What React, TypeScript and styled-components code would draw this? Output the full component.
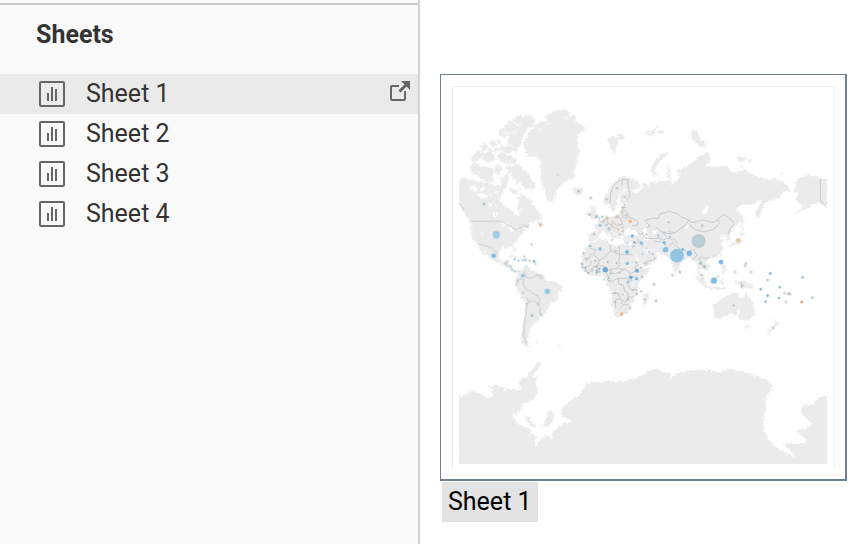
import React, { useState } from "react";
import styled, { createGlobalStyle } from "styled-components";

const GlobalStyle = createGlobalStyle`
  *, *::before, *::after { box-sizing: border-box; }
  html, body, #root { height: 100%; }
  body {
    margin: 0;
    background: #fff;
    color: #333;
    font-family: Roboto, "Liberation Sans", sans-serif;
    font-size: 25px;
    line-height: 40px;
  }
`;

const Page = styled.div`
  display: flex;
  min-height: 100%;
`;

const Sidebar = styled.aside`
  flex: 0 0 420px;
  padding-top: 3px;
  background: #fafafa;
  border-right: 2px solid #d2d2d2;
`;

const SheetsSection = styled.section`
  border-top: 2px solid #c8c8c8;
`;

const SectionTitle = styled.h2`
  margin: 0;
  padding: 10px 36px 19px;
  font-size: 25px;
  font-weight: 700;
  line-height: 40px;
`;

const SheetList = styled.ul`
  margin: 0;
  padding: 0;
  list-style: none;
`;

const SheetRow = styled.li<{ $active: boolean }>`
  display: flex;
  align-items: center;
  height: 40px;
  padding: 0 8px 0 39px;
  background: ${(p) => (p.$active ? "#eaeaea" : "transparent")};
`;

const SheetButton = styled.button`
  display: flex;
  flex: 1;
  align-items: center;
  gap: 21px;
  padding: 0;
  border: 0;
  background: none;
  color: inherit;
  font: inherit;
  text-align: left;
  cursor: pointer;
`;

const OpenButton = styled.button`
  display: flex;
  padding: 0 0 6px;
  border: 0;
  background: none;
  color: #666;
  cursor: pointer;
`;

const Preview = styled.main`
  flex: 1;
  min-width: 0;
  padding: 74px 13px 22px 20px;
`;

const PreviewCard = styled.div`
  padding: 11px 10px 9px 11px;
  border: solid #708090;
  border-width: 1px 2px 2px 1px;
`;

const MapFrame = styled.div`
  border: 1px solid #f0f0f0;
  border-bottom: 0;
`;

const MapSvg = styled.svg`
  display: block;
  width: 100%;
  height: auto;
`;

const Tooltip = styled.div`
  width: fit-content;
  margin: 1px 0 0 2px;
  padding: 0 6px;
  background: #e3e3e3;
  color: #000;
`;

const SheetIcon = () => (
  <svg width="26" height="26" viewBox="0 0 26 26" fill="none" aria-hidden="true">
    <rect x="1" y="1" width="24" height="24" rx="1" stroke="#666" strokeWidth="2" />
    <path d="M9 12v8M13 6v14M17 8v12" stroke="#666" strokeWidth="2" />
  </svg>
);

const OpenIcon = () => (
  <svg width="20" height="20" viewBox="0 0 20 20" fill="none" aria-hidden="true">
    <path d="M9 5H2Q1 5 1 6V18Q1 19 2 19H14Q15 19 15 18V10" stroke="currentColor" strokeWidth="2" />
    <path d="M9.5 10.500L17 3" stroke="currentColor" strokeWidth="3" />
    <path d="M11 0H20V9Z" fill="currentColor" />
  </svg>
);

const AMERICAS = [
  // North American mainland
  "M27 238L45 232 52 240 62 238 78 244 95 248 118 250 135 260 146 252 152 262 160 245 164 228 171 222 178 232 172 250 164 268 156 280 152 298 156 312 170 318 184 322 195 333 198 348 206 350 209 340 203 324 206 306 204 290 214 282 226 286 232 300 242 300 246 314 256 324 264 334 274 348 268 358 252 362 236 368 226 376 238 376 236 384 222 390 215 402 204 415 196 426 190 434 190 442 198 450 192 454 186 443 172 440 158 443 147 452 143 464 148 480 160 486 168 478 178 478 174 490 184 496 183 508 190 514 204 512 206 518 198 520 186 514 172 500 160 493 146 488 130 480 116 472 108 456 92 438 98 450 108 466 104 466 92 452 84 434 74 426 66 408 63 390 65 378 60 360 46 346 38 326 27 310Z",
  // South America
  "M205 518L215 508 232 505 248 510 262 520 278 530 290 542 310 545 334 556 336 566 326 578 322 600 302 610 292 626 280 642 272 652 264 650 268 662 250 668 244 684 236 692 238 702 230 714 232 730 242 742 230 740 216 728 214 712 220 690 222 664 228 636 228 608 214 594 204 572 194 554 196 542 204 530Z",
  // Greenland
  "M252 78L272 66 292 62 286 50 305 38 325 30 346 30 358 38 354 48 374 44 378 56 372 66 388 72 406 82 400 92 388 98 382 112 386 126 380 140 388 158 380 170 382 184 374 194 378 206 368 214 374 226 360 238 344 242 332 256 318 272 312 290 308 306 296 302 288 288 284 272 276 252 272 234 276 216 270 202 276 190 268 176 256 168 240 168 224 160 230 148 218 138 222 122 232 112 238 96Z",
  // Ellesmere and Axel Heiberg
  "M162 82L172 72 182 60 196 58 204 46 224 50 240 44 256 62 248 76 234 82 226 96 218 112 212 128 204 142 198 156 186 152 190 138 176 132 172 118 184 108 168 106 160 96Z",
  "M148 92L158 86 160 100 168 110 160 118 150 108Z",
  // Arctic islands
  "M116 126L130 120 142 134 128 142ZM90 138L108 130 114 146 98 154ZM138 118L154 120 150 134ZM170 136L186 142 184 156 168 150ZM132 146L144 142 150 152 138 156ZM112 148L124 146 128 154 116 156ZM150 138L162 136 164 148 154 152ZM66 168L82 154 100 158 90 172 78 184 66 186ZM98 164L116 156 132 162 136 180 116 186 100 180ZM140 164L160 156 168 168 184 168 200 180 198 190 174 190 152 186ZM160 144L178 142 184 156 166 160ZM62 194L76 188 88 198 86 212 70 222 60 214ZM84 206L100 198 112 206 128 204 132 216 126 228 134 242 118 248 98 238 82 230 74 220ZM132 200L150 194 156 212 142 226ZM146 234L160 232 156 248Z",
  // Baffin Island
  "M168 204L178 196 190 200 204 194 214 204 222 212 236 222 242 236 254 252 254 262 246 262 250 274 238 264 226 266 216 254 208 246 198 250 194 238 184 230 188 216 176 220Z",
  // Southampton and smaller islands
  "M178 262L190 268 200 270 202 280 190 282 180 274ZM204 256L212 262 210 270ZM260 362L278 366 282 378 268 378Z",
  // Iceland
  "M368 266L376 262 382 267 394 264 400 272 394 280 380 284 372 276Z",
  // Caribbean, Falklands
  "M176 468L190 466 206 476 194 472ZM210 478L226 476 228 483 214 482ZM258 724L266 726 262 729ZM326 734L333 738 330 740Z",
];

const EURASIA_AFRICA = [
  // Eurasian mainland
  "M72 380L80 372 92 362 102 354 108 342 112 350 124 352 142 346 152 340 152 326 160 320 166 314 178 312 168 308 152 310 148 296 156 282 160 270 152 276 144 290 140 306 136 324 128 334 122 326 116 314 104 312 98 300 106 288 116 276 124 260 136 244 150 234 168 226 180 236 204 246 210 260 196 268 182 266 190 276 202 280 212 270 222 262 216 250 226 250 232 258 246 248 268 246 286 246 296 240 290 216 296 200 302 214 300 236 306 260 312 244 318 254 322 238 330 228 324 214 336 206 350 200 366 190 380 176 396 164 408 162 424 170 416 186 404 200 424 200 440 202 470 198 480 212 486 222 510 212 524 210 546 222 570 236 590 238 604 240 612 234 632 242 646 254 660 266 652 276 640 272 628 284 630 292 612 298 594 304 580 310 576 326 570 344 560 356 558 336 566 318 576 300 566 300 550 312 528 312 510 314 498 330 504 336 514 348 508 366 494 382 484 394 478 404 482 420 474 424 468 410 458 404 448 412 456 420 462 424 452 430 458 446 452 458 440 468 424 474 414 478 408 484 416 500 410 512 402 514 396 504 390 502 388 516 398 530 404 546 398 546 390 532 384 520 384 504 380 486 370 484 366 474 356 472 340 482 328 494 326 508 318 518 310 502 302 484 300 474 286 470 280 462 262 458 244 452 226 442 218 438 224 450 234 462 250 456 262 472 246 488 220 500 214 496 206 480 194 460 188 444 192 428 180 430 164 430 158 418 164 408 178 404 198 408 204 400 190 390 182 396 176 388 166 396 160 408 152 404 154 416 144 414 136 402 126 394 120 392 134 406 136 412 128 416 120 404 110 396 96 398 84 404 84 414 72 422 58 420 56 402 74 398 84 396 80 386Z",
  // Africa
  "M58 430L72 426 92 420 110 418 116 432 132 438 146 434 164 434 180 438 188 446 190 460 200 482 212 500 220 504 238 502 232 520 218 532 206 548 204 564 206 576 194 588 192 604 182 612 178 628 164 642 146 652 134 646 130 624 122 604 126 584 122 568 110 556 112 540 104 528 86 526 68 528 50 520 38 508 32 494 36 472 38 458 50 442Z",
  // Madagascar
  "M232 576L238 586 230 610 222 616 216 606 220 590Z",
  // British Isles
  "M64 318L74 318 72 330 82 340 86 350 76 356 60 356 68 346 62 332ZM52 336L62 334 62 346 52 350Z",
  // Svalbard, Franz Josef Land
  "M114 116L128 110 140 112 144 104 158 104 164 112 154 120 140 118 144 128 138 138 132 160 126 148 120 134ZM224 98L234 94 236 102ZM240 92L254 88 256 98 244 104ZM256 78L264 76 264 84ZM262 94L276 90 284 96 270 102ZM236 104L246 104 242 108Z",
  // Novaya Zemlya
  "M290 156L294 162 280 172 268 184 258 198 254 212 262 228 252 226 242 216 246 200 254 184 268 168Z",
  // Severnaya Zemlya, New Siberian Islands
  "M366 94L376 88 386 104 388 118 404 132 402 142 388 140 380 126 366 118 362 106ZM390 124L400 120 408 136 394 138ZM502 174L512 168 524 176 520 184 508 186ZM530 178L544 180 540 186ZM512 196L520 198 516 204ZM630 222L640 220 636 226Z",
  // Sakhalin, Alaska
  "M514 340L520 352 518 376 524 386 516 392 514 366ZM670 270L680 262 676 248 690 236 706 224 724 228 740 232 760 236 771 242 771 326 758 314 744 308 730 312 716 322 700 328 684 336 674 342 688 330 704 320 690 308 678 304 680 292 690 284 678 278Z",
  // Japan
  "M514 396L526 400 520 408 512 406ZM514 412L518 426 506 432 494 434 482 438 482 430 498 424 508 414Z",
  // Taiwan and Philippines
  "M451 460L456 462 452 472ZM448 482L456 480 458 494 466 502 468 516 458 518 456 502 450 496Z",
  // Indonesia, Borneo, Sulawesi
  "M376 526L388 534 402 546 412 560 404 562 390 548 378 536ZM410 562L430 566 444 568 468 568 466 564 440 564 416 558ZM420 534L432 530 444 522 446 534 440 550 426 552 418 544ZM450 538L464 536 454 544 462 554 452 554Z",
  // New Guinea
  "M492 540L504 546 518 542 536 550 550 560 546 566 530 562 516 566 506 554 494 548Z",
  // Australia
  "M430 614L446 606 458 596 470 588 482 590 482 580 498 578 508 580 506 592 518 600 522 590 526 574 534 594 548 610 554 628 550 644 540 658 524 662 510 658 502 644 486 640 466 648 448 654 434 650 432 632ZM526 674L536 674 534 686 526 686Z",
  // New Zealand
  "M610 654L618 664 628 668 622 678 614 682 616 670ZM608 678L614 684 604 696 594 700 592 694 602 684Z",
  // Faroe and Mediterranean islands, Sri Lanka
  "M60 290L66 292 62 298ZM112 396L116 402 112 408ZM326 514L332 516 330 522Z",
];

const ANTARCTICA = [
  "M28 140L60 142 90 143 125 148 140 142 130 128 140 120 165 126 190 122 205 128 225 122 236 108 234 88 240 70 256 52 270 38 262 52 248 66 240 82 256 86 252 100 258 122 252 142 240 154 222 162 214 180 226 190 228 202 246 222 262 232 290 226 306 218 314 200 328 196 332 180 348 166 366 154 384 146 400 126 412 106 426 100 444 104 464 98 500 100 524 98 546 92 560 88 578 80 600 66 618 62 642 72 656 76 652 100 648 124 660 104 670 84 690 72 720 68 752 64 780 66 800 72 820 68 838 62 862 66 892 74 918 84 944 90 964 108 952 128 940 148 944 172 936 196 934 220 938 244 946 264 966 290 990 306 1026 320 1062 340 1046 320 1030 304 1014 286 1042 288 1066 286 1074 264 1048 244 1074 236 1090 230 1088 214 1070 200 1058 186 1062 172 1086 168 1104 154 1131 140 1131 340 28 340Z",
  "M50 132L66 128 86 134 102 138 80 138ZM210 96L218 88 230 90 232 104 222 116 212 106ZM128 112L140 110 150 114 136 116Z",
];

const ICE_SHELVES = [
  "M186 190L206 196 196 182 210 184 220 160 240 156 252 146 300 140 350 160 334 178 332 196 348 206 370 214 348 218 328 228 310 246 304 266 296 256 282 258 268 272 258 292 252 276 260 262 240 252 244 240 224 230 206 222 194 210Z",
];

const ICE_ISLANDS = [
  "M292 186L302 180 310 192 308 216 294 228 276 232 288 210ZM224 196L236 202 242 216 258 222 256 232 238 226Z",
];

const LAKES = [
  "M152 290L166 280 180 290 196 298 206 310 196 328 198 346 186 332 166 320 152 308Z",
  "M62 258L74 258 84 266 76 274 62 268ZM82 284L94 280 112 288 104 296 90 292ZM92 266L102 262 106 270 96 274ZM116 284L124 282 122 294ZM114 302L122 308 128 322 118 322ZM134 270L142 272 138 282ZM128 338L138 338 138 352 132 350ZM132 312L140 316 138 324ZM210 326L222 324 222 332 212 332ZM148 368L164 366 178 374 166 378ZM176 378L186 382 190 396 180 392ZM196 376L206 382 200 388ZM96 398L100 396 102 402 96 402ZM308 568L318 562 316 572Z",
];

const INNER_SEAS = [
  "M162 388L174 386 188 390 198 398 188 402 174 400 162 402ZM216 390L228 386 234 400 230 410 238 420 228 422 218 408ZM248 392L260 390 260 400 250 402ZM166 264L160 272 164 278 170 270ZM338 392L352 384 356 372 350 370 346 382ZM398 344L400 330 408 320 416 324 410 330 412 340ZM502 640L504 628 510 632 506 644ZM186 546L192 550 188 560Z",
];

const ELLESMERE_FJORDS =
  "M160 98L178 102 196 98 204 88M182 60L198 72 214 74M262 80L272 96M286 62L294 78 302 68M340 52L354 56M150 108L162 112 172 120";

const AMERICAS_BORDERS =
  "M27 308L36 322 44 334M64 364H152L166 370 184 380 196 388 208 384 224 376 232 382 236 372M86 432L104 436 116 440 124 442 132 452 144 460M166 488L172 500M222 512L226 530 240 536 252 530 262 524M262 520L266 532 280 536M222 536L220 552 226 568 238 570 248 580 264 588 270 602 264 612 252 602 236 606 230 592M230 606L228 640 222 672 222 710 230 734M264 614L272 626 268 640 280 646M204 544L198 556M218 534L204 540";

const EURASIA_BORDERS =
  "M120 312L122 280 130 258 144 244 158 238 176 240M158 242L156 258M172 240L176 262 180 290 170 300M154 322L168 322M160 328L172 338 178 352 190 356 206 366 200 376 186 376M158 334V352L174 354M86 350L90 364 104 368M110 350L114 370 126 376M134 352L150 352 158 372 140 376M150 378L160 388M226 362L246 354 264 356 270 342 296 334 320 340 336 352 352 358 366 368 400 360 430 368 446 356 462 342 476 352 494 370 482 382 474 402M226 364L240 378 230 384M256 380L276 396 300 402 316 398 332 386 346 376 356 360M356 372L374 388 402 396 430 388 448 372 444 358M262 410L280 420 292 414 310 420M278 398L290 410M204 400L220 404 224 414 240 416 268 414M200 412L210 430 222 440M194 432L206 424M254 424L276 426 290 440 276 456M280 456L296 440 308 428 322 440 332 448 352 454 370 448M312 416L322 430M372 450L380 466 370 478M382 480L394 470 404 476 420 472M390 478L398 496 410 504M218 492L230 484 248 480M60 444L78 450 70 464 90 480 104 472 122 452 120 434M64 460L58 474 42 476M120 452L148 464 148 438M148 464H188M150 466L146 482 150 494 140 506 120 508 108 516 104 500 88 496 70 500 62 512 56 522M88 480L82 500 80 526M108 516L116 532 112 540M120 508L128 522 148 518 164 506 182 520 196 514 196 498 206 494M146 506L162 510M112 542L128 544 140 536 176 534 182 520M144 536L146 552 160 556 164 574 176 580 172 592 190 590M122 580H146L148 596 136 600V622M148 596L166 606 176 594M150 626L162 612 176 616M176 536L174 556 182 568 204 570M182 534L198 528M48 500L60 496 64 482M426 534L438 540M514 546V564";

const ALASKA_BORDER = "M751 236V302L764 314 771 308";

type Dot = [x: number, y: number, r: number, color: string];

const B = "#83bbdc";
const D = "#5fa3cf";
const O = "#f0b26c";
const T = "#a5ccd6";

const AMERICAS_DOTS: Dot[] = [
  [102, 312, 4, B], [139, 404, 11, "#9ecae1"], [131, 467, 7, "#7dbbe0"], [271, 375, 4, O], [245, 434, 3, B],
  [292, 574, 8, "#8fc4df"], [246, 647, 4, B], [218, 527, 5, B], [203, 542, 3, B], [220, 578, 3, T],
  [231, 612, 3, T], [265, 612, 3, T], [229, 500, 3, B], [194, 478, 3, D], [206, 482, 3, B], [223, 470, 3, B],
  [220, 480, 3, B], [228, 480, 3, B], [239, 482, 3, O], [252, 484, 4, D], [256, 492, 3, T], [166, 492, 3, B],
  [172, 486, 2, D], [174, 498, 2, B], [183, 500, 3, B], [186, 508, 3, B], [194, 513, 3, B], [206, 514, 2, O],
  [263, 524, 2, O], [272, 526, 3, B], [280, 529, 2, B], [386, 274, 3, B], [323, 225, 2, "#bbb"], [272, 644, 2, T],
];

const EURASIA_DOTS: Dot[] = [
  [321, 467, 21, "#92c5e3"], [386, 423, 21, "#b9ced5"], [358, 460, 8, "#7db9df"], [287, 449, 8, "#88bfe1"],
  [283, 428, 5, B], [106, 509, 8, "#69abd6"], [201, 512, 6, "#69abd6"], [171, 456, 6, "#7db9df"],
  [187, 408, 5, B], [79, 350, 5, T], [90, 376, 5, T], [72, 402, 3, B], [112, 355, 5, "#dec3a4"],
  [117, 387, 5, T], [181, 364, 5, O], [142, 349, 4, "#dec3a4"], [163, 314, 3, O], [158, 324, 3, O],
  [155, 336, 3, O], [168, 345, 3, O], [128, 366, 3, O], [136, 372, 2, O], [128, 380, 3, O], [144, 374, 2, O],
  [145, 388, 3, O], [158, 394, 3, O], [160, 380, 2, O], [138, 384, 2, O], [150, 404, 2, O], [102, 362, 3, B],
  [110, 375, 3, B], [124, 374, 2, O], [97, 350, 3, B], [59, 344, 3, D], [62, 294, 4, T], [110, 298, 3, B],
  [141, 265, 3, B], [164, 290, 3, T], [26, 274, 3, B], [296, 367, 3, B], [396, 377, 3, B], [193, 427, 3, "#3178af"],
  [190, 438, 3, B], [214, 429, 5, B], [229, 403, 3, B], [218, 398, 2, O], [265, 406, 3, B], [282, 397, 2, B],
  [300, 410, 3, B], [300, 396, 2, B], [310, 398, 2, B], [228, 445, 2, B], [238, 456, 3, B], [248, 462, 3, B],
  [254, 476, 3, B], [229, 491, 3, B], [217, 462, 2, B], [338, 448, 4, D], [330, 516, 4, T], [308, 526, 4, "#d5cdbb"],
  [60, 438, 4, B], [90, 447, 5, B], [137, 452, 3, B], [41, 460, 3, B], [50, 478, 3, B], [76, 482, 3, B],
  [113, 486, 3, B], [140, 489, 3, B], [172, 490, 5, B], [199, 488, 3, B], [212, 503, 3, B], [36, 492, 3, D],
  [38, 502, 3, B], [46, 504, 3, D], [48, 512, 3, B], [54, 518, 3, D], [66, 510, 3, B], [78, 500, 3, B],
  [80, 512, 3, D], [88, 507, 3, D], [80, 517, 3, B], [87, 515, 3, B], [122, 520, 3, B], [148, 517, 2, B],
  [103, 538, 3, T], [116, 534, 3, B], [119, 542, 2, B], [174, 546, 4, B], [183, 532, 5, D], [200, 536, 5, B],
  [183, 540, 2, B], [216, 530, 3, B], [136, 579, 3, B], [158, 584, 2, D], [188, 571, 2, D], [200, 582, 3, B],
  [174, 598, 3, D], [135, 606, 3, B], [155, 608, 2, B], [180, 624, 3, B], [168, 638, 2, T], [155, 642, 5, O],
  [214, 574, 3, B], [225, 599, 3, B], [252, 553, 4, T], [258, 602, 4, T], [126, 420, 3, T], [172, 430, 2, B],
  [505, 421, 7, "#dfccac"], [453, 486, 7, "#78b5df"], [432, 542, 9, "#83bfe2"], [391, 490, 5, T],
  [403, 500, 4, B], [396, 526, 3, B], [400, 535, 2, D], [397, 376, 2, B], [491, 616, 3, B], [518, 557, 3, B],
  [610, 684, 3, T], [495, 516, 4, "#cddbd8"], [527, 491, 4, T], [525, 498, 3, T], [543, 516, 4, "#ecd3b1"],
  [601, 520, 4, D], [593, 540, 4, T], [572, 568, 4, D], [629, 562, 4, B], [698, 532, 4, B], [593, 587, 4, D],
  [587, 605, 4, B], [627, 594, 4, B], [644, 580, 4, "#d2d5d6"], [656, 581, 4, B], [661, 583, 3, O],
  [648, 606, 4, "#d2dbdc"], [695, 606, 4, "#dc7d42"], [727, 593, 4, T], [432, 468, 2, T],
];

const Dots = ({ dots }: { dots: Dot[] }) => (
  <>
    {dots.map(([x, y, r, color], i) =>
      r <= 4 ? (
        <g key={i}>
          <circle cx={x} cy={y} r={r + 2} fill="#b8bdc0" fillOpacity="0.3" />
          <circle cx={x} cy={y} r={r - 0.75} fill={color} fillOpacity="0.9" />
        </g>
      ) : (
        <circle key={i} cx={x} cy={y} r={r} fill={color} />
      )
    )}
  </>
);

const WorldMap = () => (
  <MapSvg viewBox="3 3 1143 1149" role="img" aria-label="World map of Sheet 1">
    <defs>
      <filter id="coast" x="0" y="0" width="1149" height="1152" filterUnits="userSpaceOnUse">
        <feTurbulence type="fractalNoise" baseFrequency="0.12" numOctaves="3" seed="4" />
        <feDisplacementMap in="SourceGraphic" scale="15" xChannelSelector="R" yChannelSelector="G" />
      </filter>
      <clipPath id="extent">
        <rect x="21" y="0" width="1104" height="1132" />
      </clipPath>
    </defs>
    <g clipPath="url(#extent)">
      <g filter="url(#coast)" fill="#ebebeb">
        <g transform="translate(-6 42)">
          <path d={AMERICAS.join("")} stroke="#ebebeb" strokeWidth="2" />
          <path d={LAKES.join("")} fill="#fff" />
          <path d={ELLESMERE_FJORDS} fill="none" stroke="#fff" strokeWidth="3" />
        </g>
        <g transform="translate(354 42)">
          <path d={EURASIA_AFRICA.join("")} stroke="#ebebeb" strokeWidth="2" />
          <path d={INNER_SEAS.join("")} fill="#fff" />
        </g>
        <g transform="translate(-6 792)">
          <path d={ANTARCTICA.join("")} stroke="#ebebeb" strokeWidth="10" />
          <path d={ICE_SHELVES.join("")} fill="#fff" />
          <path d={ICE_ISLANDS.join("")} />
        </g>
      </g>
    </g>
    <g fill="none" stroke="#c9c9c9" strokeWidth="3" strokeLinejoin="round">
      <path d={AMERICAS_BORDERS} transform="translate(-6 42)" />
      <path d={EURASIA_BORDERS + ALASKA_BORDER} transform="translate(354 42)" />
    </g>
    <g transform="translate(-6 42)">
      <Dots dots={AMERICAS_DOTS} />
    </g>
    <g transform="translate(354 42)">
      <Dots dots={EURASIA_DOTS} />
    </g>
  </MapSvg>
);

const SHEETS = ["Sheet 1", "Sheet 2", "Sheet 3", "Sheet 4"];

export default function App() {
  const [active, setActive] = useState(SHEETS[0]);

  return (
    <>
      <GlobalStyle />
      <Page>
        <Sidebar>
          <SheetsSection>
            <SectionTitle>Sheets</SectionTitle>
            <SheetList>
              {SHEETS.map((name) => (
                <SheetRow key={name} $active={name === active}>
                  <SheetButton type="button" onClick={() => setActive(name)}>
                    <SheetIcon />
                    {name}
                  </SheetButton>
                  {name === active && (
                    <OpenButton type="button" aria-label={`Go to ${name}`}>
                      <OpenIcon />
                    </OpenButton>
                  )}
                </SheetRow>
              ))}
            </SheetList>
          </SheetsSection>
        </Sidebar>
        <Preview>
          <PreviewCard>
            <MapFrame>
              <WorldMap />
            </MapFrame>
          </PreviewCard>
          <Tooltip>{active}</Tooltip>
        </Preview>
      </Page>
    </>
  );
}
